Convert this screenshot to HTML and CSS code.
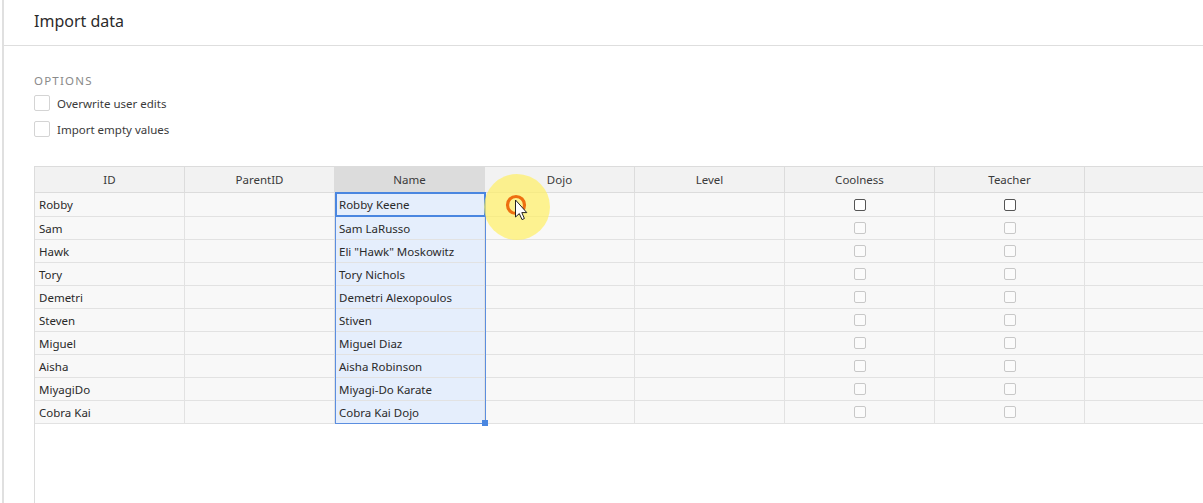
FILE: index.html
```html
<!DOCTYPE html>
<html>
<head>
<meta charset="utf-8">
<link rel="stylesheet" href="styles.css">
</head>
<body>
<div class="dialog">
  <div class="header"><span class="title">Import data</span></div>
  <div class="options">
    <div class="opt-label">OPTIONS</div>
    <label class="opt"><span class="box"></span>Overwrite user edits</label>
    <label class="opt"><span class="box"></span>Import empty values</label>
  </div>
  <div class="grid-wrap">
    <div class="grid">
      <div class="hd">ID</div><div class="hd">ParentID</div><div class="hd hd-sel">Name</div><div class="hd">Dojo</div><div class="hd">Level</div><div class="hd">Coolness</div><div class="hd">Teacher</div><div class="hd"></div>

      <div class="c">Robby</div><div class="c"></div><div class="c sel">Robby Keene</div><div class="c"></div><div class="c"></div><div class="c cb"><span class="chk dark"></span></div><div class="c cb"><span class="chk dark"></span></div><div class="c"></div>
      <div class="c">Sam</div><div class="c"></div><div class="c sel">Sam LaRusso</div><div class="c"></div><div class="c"></div><div class="c cb"><span class="chk"></span></div><div class="c cb"><span class="chk"></span></div><div class="c"></div>
      <div class="c">Hawk</div><div class="c"></div><div class="c sel">Eli "Hawk" Moskowitz</div><div class="c"></div><div class="c"></div><div class="c cb"><span class="chk"></span></div><div class="c cb"><span class="chk"></span></div><div class="c"></div>
      <div class="c">Tory</div><div class="c"></div><div class="c sel">Tory Nichols</div><div class="c"></div><div class="c"></div><div class="c cb"><span class="chk"></span></div><div class="c cb"><span class="chk"></span></div><div class="c"></div>
      <div class="c">Demetri</div><div class="c"></div><div class="c sel">Demetri Alexopoulos</div><div class="c"></div><div class="c"></div><div class="c cb"><span class="chk"></span></div><div class="c cb"><span class="chk"></span></div><div class="c"></div>
      <div class="c">Steven</div><div class="c"></div><div class="c sel">Stiven</div><div class="c"></div><div class="c"></div><div class="c cb"><span class="chk"></span></div><div class="c cb"><span class="chk"></span></div><div class="c"></div>
      <div class="c">Miguel</div><div class="c"></div><div class="c sel">Miguel Diaz</div><div class="c"></div><div class="c"></div><div class="c cb"><span class="chk"></span></div><div class="c cb"><span class="chk"></span></div><div class="c"></div>
      <div class="c">Aisha</div><div class="c"></div><div class="c sel">Aisha Robinson</div><div class="c"></div><div class="c"></div><div class="c cb"><span class="chk"></span></div><div class="c cb"><span class="chk"></span></div><div class="c"></div>
      <div class="c">MiyagiDo</div><div class="c"></div><div class="c sel">Miyagi-Do Karate</div><div class="c"></div><div class="c"></div><div class="c cb"><span class="chk"></span></div><div class="c cb"><span class="chk"></span></div><div class="c"></div>
      <div class="c">Cobra Kai</div><div class="c"></div><div class="c sel">Cobra Kai Dojo</div><div class="c"></div><div class="c"></div><div class="c cb"><span class="chk"></span></div><div class="c cb"><span class="chk"></span></div><div class="c"></div>
    </div>
    <div class="range"></div>
    <div class="active"></div>
    <div class="handle"></div>
    <div class="spot">
      <svg class="cursor" width="60" height="60" viewBox="0 0 60 60">
        <circle cx="21" cy="20" r="8.5" fill="none" stroke="#ee6f10" stroke-width="3.2"/>
        <path d="M20.5 15 L20.5 32 L24.3 28.6 L27 34.6 L29.4 33.5 L26.8 27.6 L31.8 27.6 Z" fill="#fff" stroke="#222" stroke-width="1" stroke-linejoin="round"/>
      </svg>
    </div>
  </div>
</div>
</body>
</html>
```

FILE: styles.css
```css
html, body {
  margin: 0;
  padding: 0;
  background: #ffffff;
  height: 100%;
  overflow: hidden;
}
body {
  font-family: "Noto Sans", "Open Sans", sans-serif;
  color: #333;
}
.dialog {
  margin-left: 2px;
  border-left: 2px solid #e0e0e0;
  height: 503px;
  box-sizing: border-box;
}
.header {
  height: 46px;
  border-bottom: 1px solid #dedede;
  display: flex;
  align-items: center;
  padding-left: 30px;
  box-sizing: border-box;
}
.title {
  font-size: 16px;
  color: #2b2b2b;
  position: relative;
  top: -2px;
}
.options {
  padding: 27px 0 0 30px;
  height: 120px;
  box-sizing: border-box;
}
.opt-label {
  font-size: 11.5px;
  letter-spacing: 1.2px;
  color: #8a8a8a;
  line-height: 15px;
  margin-bottom: 2px;
}
.opt {
  display: flex;
  align-items: center;
  font-size: 11.5px;
  color: #3a3a3a;
  height: 26px;
}
.box {
  width: 14px;
  height: 14px;
  border: 1px solid #d4d4d4;
  border-radius: 2px;
  margin-right: 7px;
  background: #fff;
}
.grid-wrap {
  position: relative;
  margin-left: 30px;
  border-left: 1px solid #dcdcdc;
  height: 337px;
}
.grid {
  display: grid;
  grid-template-columns: repeat(7, 150px) 150px;
  grid-template-rows: 26px 24px repeat(9, 23px);
  border-top: 1px solid #dcdcdc;
  width: 1200px;
}
.hd {
  background: #f2f2f2;
  border-right: 1px solid #dcdcdc;
  border-bottom: 1px solid #dcdcdc;
  font-size: 11.5px;
  color: #3a3a3a;
  display: flex;
  align-items: center;
  justify-content: center;
}
.hd-sel {
  background: #dcdcdc;
}
.c {
  background: #f8f8f8;
  border-right: 1px solid #e2e2e2;
  border-bottom: 1px solid #e2e2e2;
  font-size: 11.5px;
  color: #2a2a2a;
  display: flex;
  align-items: center;
  padding-left: 4px;
  white-space: nowrap;
  overflow: hidden;
}
.c.sel {
  background: #e5eefc;
}
.c.cb {
  justify-content: center;
  padding-left: 0;
}
.chk {
  width: 10px;
  height: 10px;
  border: 1px solid #c8c8c8;
  border-radius: 2px;
  background: #fbfbfb;
}
.chk.dark {
  border-color: #555;
  background: #fff;
}
.range {
  position: absolute;
  left: 300px;
  top: 26px;
  width: 151px;
  height: 232px;
  border: 1px solid #5b8ee0;
  box-sizing: border-box;
  pointer-events: none;
}
.active {
  position: absolute;
  left: 300px;
  top: 26px;
  width: 151px;
  height: 25px;
  border: 2px solid #4a86e0;
  box-sizing: border-box;
}
.handle {
  position: absolute;
  left: 447px;
  top: 254px;
  width: 6px;
  height: 6px;
  background: #4a86e0;
}
.spot {
  position: absolute;
  left: 449px;
  top: 8px;
  width: 66px;
  height: 66px;
  border-radius: 50%;
  background: rgba(255, 240, 100, 0.7);
}
.cursor {
  position: absolute;
  left: 11px;
  top: 11px;
}
```
